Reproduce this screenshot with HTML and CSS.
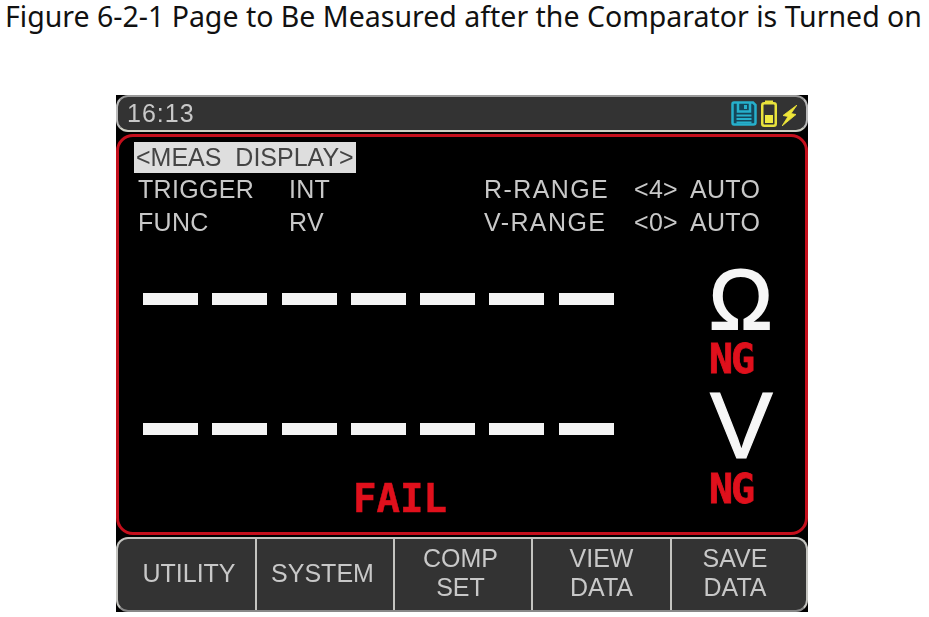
FILE: index.html
```html
<!DOCTYPE html>
<html lang="en">
<head>
  <meta charset="UTF-8">
  <title>Page to Be Measured</title>
  <link rel="stylesheet" href="styles.css">
</head>
<body>
  <p class="caption">Figure 6-2-1 Page to Be Measured after the Comparator is Turned on</p>

  <div class="screen">
    <div class="status-bar">
      <span class="clock">16:13</span>
      <div class="status-icons">
        <svg class="icon-save" viewBox="0 0 26 25">
          <path d="M3 1.500H22L24.500 4V21.500Q24.500 23.500 22.500 23.500H3Q1.500 23.500 1.500 21.500V3Q1.500 1.500 3 1.500Z" fill="#15465a" stroke="#26b0cc" stroke-width="2.500"/>
          <path d="M7 2V10.500H19V2" fill="none" stroke="#26b0cc" stroke-width="2.500"/>
          <path d="M13 4H16V8H13Z" fill="#26b0cc"/>
          <path d="M5.500 14.500H20.500M5.500 18H20.500M5.500 21.500H20.500" stroke="#26b0cc" stroke-width="2"/>
        </svg>
        <svg class="icon-battery" viewBox="0 0 16 27">
          <path d="M4 0.500H12V4H4Z" fill="#e8e23c"/>
          <rect x="1.250" y="3.250" width="13.500" height="22.500" rx="2" fill="none" stroke="#e8e23c" stroke-width="2.500"/>
          <rect x="4" y="15" width="8" height="8" fill="#f0ea40"/>
        </svg>
        <svg class="icon-bolt" viewBox="0 0 15 21">
          <path d="M15 0L1 10.500L6 11.500L0 21L14 9.500L9 8.500Z" fill="#efe63a" stroke="#efe63a" stroke-width="0.800"/>
        </svg>
      </div>
    </div>

    <div class="panel">
      <div class="mode-title">&lt;MEAS&nbsp; DISPLAY&gt;</div>
      <div class="info">
        <span>TRIGGER</span><span>INT</span><span class="range">R-RANGE</span><span>&lt;4&gt;</span><span>AUTO</span>
        <span>FUNC</span><span>RV</span><span class="range">V-RANGE</span><span>&lt;0&gt;</span><span>AUTO</span>
      </div>
      <div class="measure">
        <div class="values">
          <div class="dashes"><i></i><i></i><i></i><i></i><i></i><i></i><i></i></div>
          <div class="dashes"><i></i><i></i><i></i><i></i><i></i><i></i><i></i></div>
          <div class="result">FAIL</div>
        </div>
        <div class="units">
          <div class="unit unit-ohm">Ω</div>
          <div class="ng">NG</div>
          <div class="unit unit-volt">V</div>
          <div class="ng">NG</div>
        </div>
      </div>
    </div>

    <div class="softkeys">
      <div class="key key-utility">UTILITY</div>
      <div class="key key-system">SYSTEM</div>
      <div class="key key-comp">COMP<br>SET</div>
      <div class="key">VIEW<br>DATA</div>
      <div class="key key-save">SAVE<br>DATA</div>
    </div>
  </div>
</body>
</html>
```

FILE: styles.css
```css
body {
  margin: 0;
  background-color: white;
  font-family: "Noto Sans", sans-serif;
}

.caption {
  margin: 0;
  padding-left: 5px;
  height: 95px;
  font-size: 28.500px;
  line-height: 33px;
  color: #111;
  white-space: nowrap;
}

/* Foto do aparelho, um pouco borrada */
.screen {
  width: 692px;
  height: 517px;
  margin-left: 116px;
  background-color: #000;
  font-family: "Liberation Sans", sans-serif;
  font-size: 25px;
  color: #c8c8c8;
  filter: blur(0.7px);
}

.status-bar {
  height: 37px;
  box-sizing: border-box;
  display: flex;
  align-items: center;
  justify-content: space-between;
  padding: 0 9px 0 9px;
  background-color: #333;
  border-top: 2px solid #999;
  border-bottom: 2px solid #cfcfc4;
  border-left: 2px solid #bbb;
  border-right: 2px solid #bbb;
  border-radius: 12px;
}

.clock {
  letter-spacing: 1px;
}

.status-icons {
  display: flex;
  align-items: center;
  gap: 4px;
}

.icon-save { width: 26px; height: 25px; }
.icon-battery { width: 16px; height: 27px; }
.icon-bolt { width: 15px; height: 21px; margin: 3px 0 0 1px; }

.panel {
  height: 401px;
  box-sizing: border-box;
  margin-top: 2px;
  padding: 5px 0 0 15px;
  border: 3px solid #c40f1c;
  border-radius: 17px;
  background-color: #000;
}

.mode-title {
  width: max-content;
  height: 31px;
  padding: 0 2px 0 2px;
  background-color: #dedede;
  color: #444;
  line-height: 30px;
}

.info {
  display: grid;
  grid-template-columns: 151px 195px 150px 56px auto;
  padding-left: 4px;
  line-height: 33px;
  letter-spacing: 0.3px;
}

.info .range {
  letter-spacing: 1.400px;
}

.measure {
  display: flex;
}

.values {
  width: 575px;
  padding-top: 54px;
}

.dashes {
  display: flex;
  gap: 14.300px;
  height: 130px;
  padding-left: 9px;
}

.dashes + .dashes {
  height: 53px;
}

.dashes i {
  width: 55px;
  height: 12px;
  background-color: #f4f4f4;
}

.result {
  margin-left: 219px;
  font-family: "DejaVu Sans Mono", monospace;
  font-weight: bold;
  font-size: 39px;
  line-height: 46px;
  color: #e0101c;
  -webkit-text-stroke: 0.500px #e0101c;
}

.units {
  display: flex;
  flex-direction: column;
  align-items: flex-start;
}

.unit {
  color: #f6f6f6;
  font-size: 85px;
  -webkit-text-stroke: 1.800px #f6f6f6;
}

.unit-ohm {
  line-height: 75px;
  margin-top: 23px;
}

.unit-volt {
  font-size: 94px;
  line-height: 82px;
  margin-top: 4px;
  margin-left: 1px;
  -webkit-text-stroke-width: 1.200px;
}

.ng {
  font-family: "DejaVu Sans Mono", monospace;
  font-weight: bold;
  font-size: 40px;
  line-height: 44px;
  letter-spacing: -2px;
  color: #e0101c;
  -webkit-text-stroke: 0.800px #e0101c;
}

.softkeys {
  display: grid;
  grid-template-columns: 137px 138px 138px 139px 1fr;
  height: 75px;
  box-sizing: border-box;
  margin-top: 2px;
  background-color: #333;
  border: 2px solid #c4c4c0;
  border-bottom-color: #888;
  border-radius: 12px;
}

.key {
  display: flex;
  align-items: center;
  justify-content: center;
  text-align: center;
  line-height: 29px;
  padding-bottom: 3px;
  border-left: 2px solid #c4c4c0;
}

.key-utility {
  padding-left: 5px;
  border-left: none;
}

.key-system { padding-right: 5px; }
.key-comp { padding-right: 5px; }
.key-save { padding-right: 8px; }
```
